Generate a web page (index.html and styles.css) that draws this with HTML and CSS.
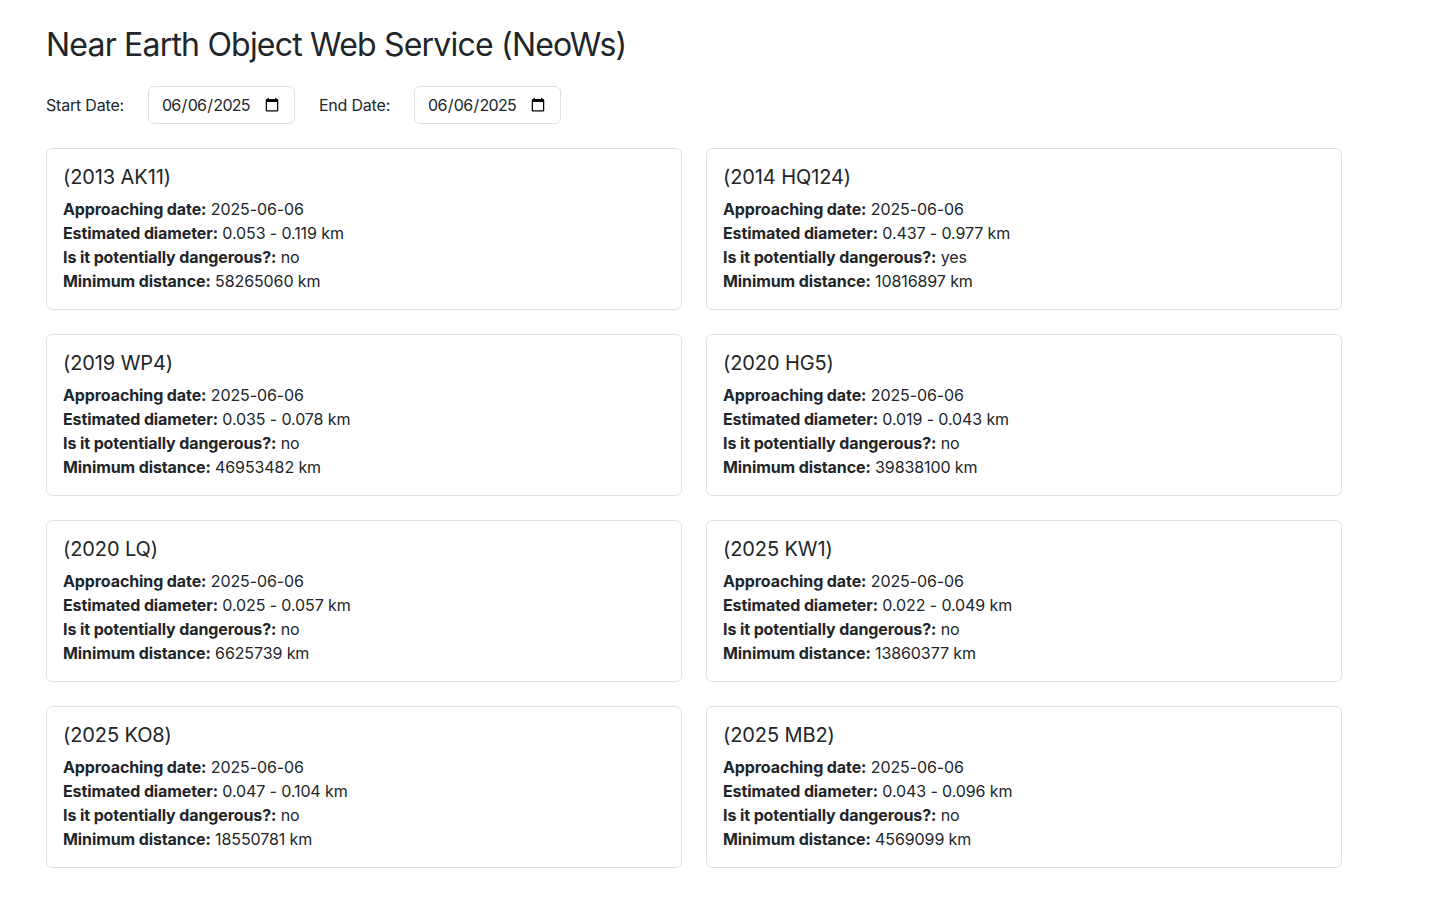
FILE: index.html
```html
<!DOCTYPE html>
<html lang="en">
<head>
<meta charset="utf-8">
<title>NeoWs</title>
<link rel="stylesheet" href="styles.css">
</head>
<body>
<main class="page">
  <h1 class="title">Near Earth Object Web Service (NeoWs)</h1>
  <form class="filters">
    <label class="filter-label" for="start">Start Date:</label>
    <input class="date-input" type="date" id="start" value="2025-06-06">
    <label class="filter-label" for="end">End Date:</label>
    <input class="date-input" type="date" id="end" value="2025-06-06">
  </form>
  <section class="grid">
    <article class="card">
      <h5 class="card-title">(2013 AK11)</h5>
      <div class="row"><b>Approaching date:</b> 2025-06-06</div>
      <div class="row"><b>Estimated diameter:</b> 0.053 - 0.119 km</div>
      <div class="row"><b>Is it potentially dangerous?:</b> no</div>
      <div class="row"><b>Minimum distance:</b> 58265060 km</div>
    </article>
    <article class="card">
      <h5 class="card-title">(2014 HQ124)</h5>
      <div class="row"><b>Approaching date:</b> 2025-06-06</div>
      <div class="row"><b>Estimated diameter:</b> 0.437 - 0.977 km</div>
      <div class="row"><b>Is it potentially dangerous?:</b> yes</div>
      <div class="row"><b>Minimum distance:</b> 10816897 km</div>
    </article>
    <article class="card">
      <h5 class="card-title">(2019 WP4)</h5>
      <div class="row"><b>Approaching date:</b> 2025-06-06</div>
      <div class="row"><b>Estimated diameter:</b> 0.035 - 0.078 km</div>
      <div class="row"><b>Is it potentially dangerous?:</b> no</div>
      <div class="row"><b>Minimum distance:</b> 46953482 km</div>
    </article>
    <article class="card">
      <h5 class="card-title">(2020 HG5)</h5>
      <div class="row"><b>Approaching date:</b> 2025-06-06</div>
      <div class="row"><b>Estimated diameter:</b> 0.019 - 0.043 km</div>
      <div class="row"><b>Is it potentially dangerous?:</b> no</div>
      <div class="row"><b>Minimum distance:</b> 39838100 km</div>
    </article>
    <article class="card">
      <h5 class="card-title">(2020 LQ)</h5>
      <div class="row"><b>Approaching date:</b> 2025-06-06</div>
      <div class="row"><b>Estimated diameter:</b> 0.025 - 0.057 km</div>
      <div class="row"><b>Is it potentially dangerous?:</b> no</div>
      <div class="row"><b>Minimum distance:</b> 6625739 km</div>
    </article>
    <article class="card">
      <h5 class="card-title">(2025 KW1)</h5>
      <div class="row"><b>Approaching date:</b> 2025-06-06</div>
      <div class="row"><b>Estimated diameter:</b> 0.022 - 0.049 km</div>
      <div class="row"><b>Is it potentially dangerous?:</b> no</div>
      <div class="row"><b>Minimum distance:</b> 13860377 km</div>
    </article>
    <article class="card">
      <h5 class="card-title">(2025 KO8)</h5>
      <div class="row"><b>Approaching date:</b> 2025-06-06</div>
      <div class="row"><b>Estimated diameter:</b> 0.047 - 0.104 km</div>
      <div class="row"><b>Is it potentially dangerous?:</b> no</div>
      <div class="row"><b>Minimum distance:</b> 18550781 km</div>
    </article>
    <article class="card">
      <h5 class="card-title">(2025 MB2)</h5>
      <div class="row"><b>Approaching date:</b> 2025-06-06</div>
      <div class="row"><b>Estimated diameter:</b> 0.043 - 0.096 km</div>
      <div class="row"><b>Is it potentially dangerous?:</b> no</div>
      <div class="row"><b>Minimum distance:</b> 4569099 km</div>
    </article>
  </section>
</main>
</body>
</html>
```
FILE: styles.css
```css
* { box-sizing: border-box; }
html, body { margin: 0; padding: 0; background: #fff; }
body {
  font-family: Inter, "Noto Sans", "Liberation Sans", sans-serif;
  font-size: 16px;
  line-height: 1.5;
  color: #212529;
}
.page {
  width: 1296px;
  margin-left: 46px;
  padding-top: 26px;
}
.title {
  margin: 0 0 22px;
  font-size: 32px;
  font-weight: 400;
  line-height: 38px;
  letter-spacing: -0.8px;
}
.filters {
  display: flex;
  align-items: center;
  margin: 0 0 24px;
}
.filter-label {
  margin-right: 24px;
  letter-spacing: -0.2px;
}
.date-input {
  font-family: inherit;
  font-size: 16px;
  letter-spacing: -0.7px;
  color: #212529;
  height: 38px;
  width: 147px;
  padding: 6px 12px;
  border: 1px solid #dee2e6;
  border-radius: 6px;
  background: #fff;
  margin-right: 24px;
}
.grid {
  display: grid;
  grid-template-columns: 1fr 1fr;
  gap: 24px;
}
.card {
  border: 1px solid #dee2e6;
  border-radius: 6px;
  padding: 16px;
}
.card-title {
  margin: 0 0 8px;
  font-size: 20px;
  font-weight: 400;
  line-height: 24px;
  letter-spacing: -0.1px;
}
.row { letter-spacing: -0.1px; }
.row b { font-weight: 700; }
```
